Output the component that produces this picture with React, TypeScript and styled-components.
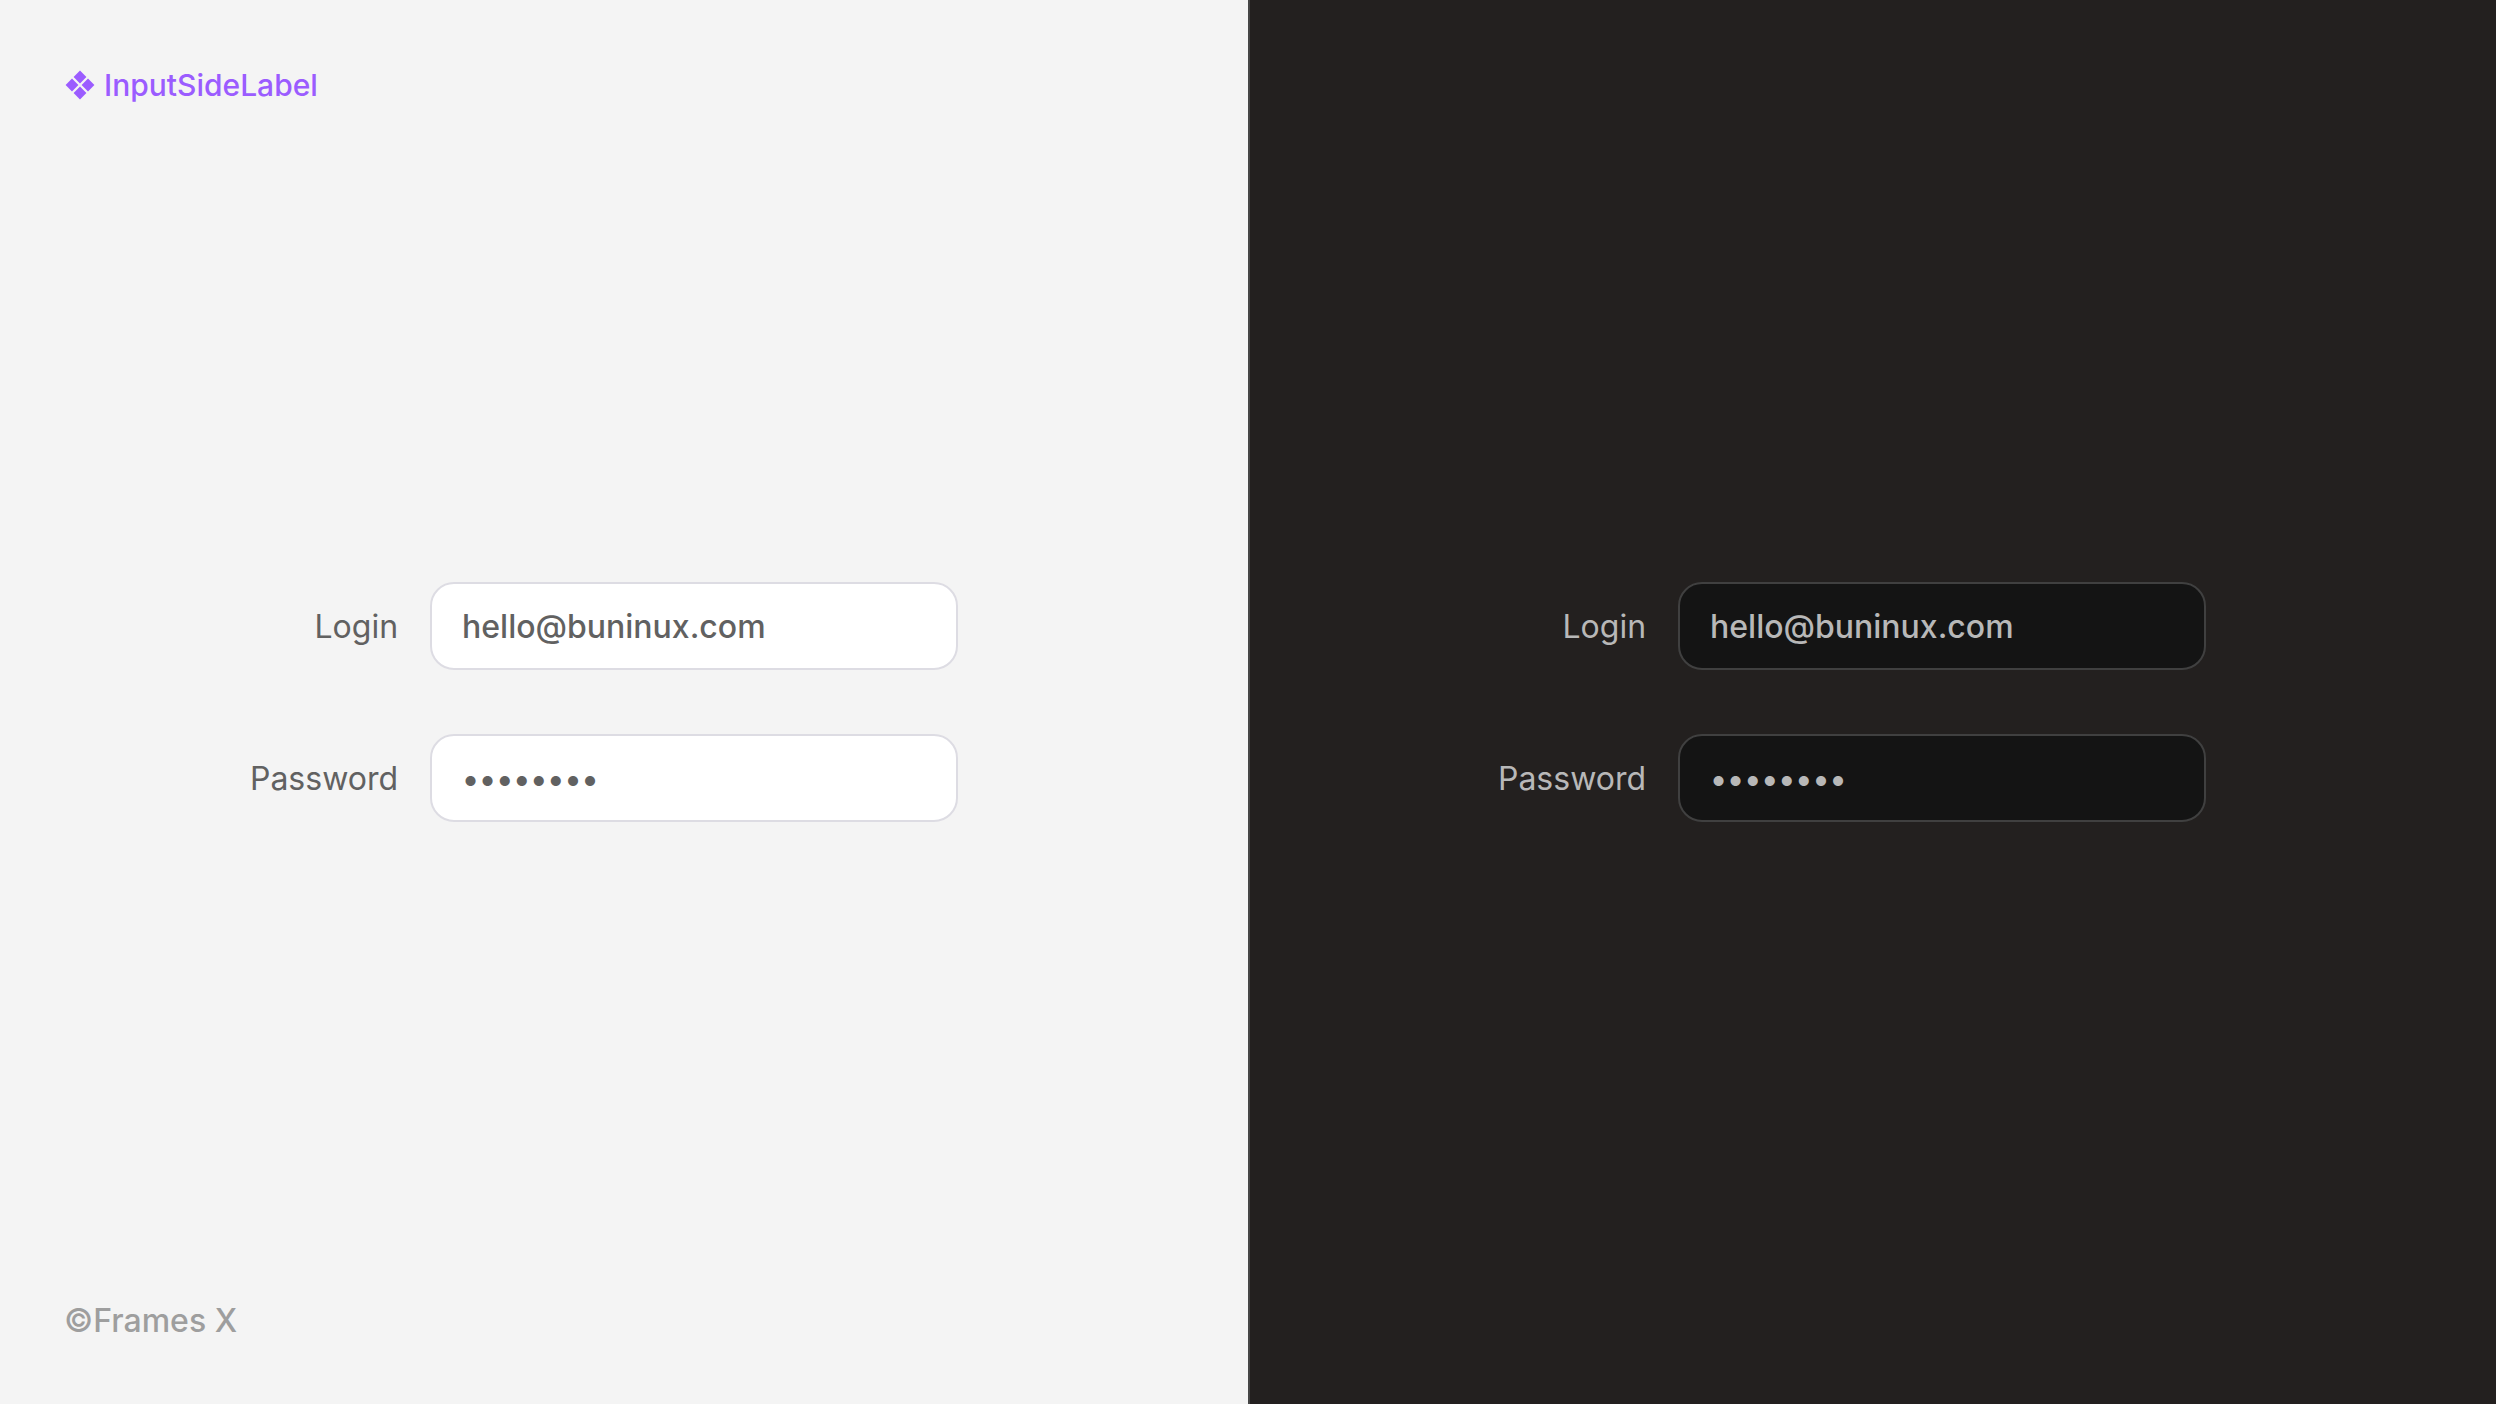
import { useId, useState } from "react";
import styled, { createGlobalStyle, ThemeProvider } from "styled-components";

const light = {
  surface: "#f4f4f4",
  field: "#ffffff",
  border: "#dddce3",
  text: "#616161",
  divider: "transparent",
};

const dark = {
  surface: "#23201f",
  field: "#141414",
  border: "#404040",
  text: "#b8b8b8",
  divider: "#464646",
};

const GlobalStyle = createGlobalStyle`
  *, *::before, *::after { box-sizing: border-box; }
  body {
    margin: 0;
    font-family: Inter, "Liberation Sans", sans-serif;
    font-size: 32px;
    line-height: 38px;
  }
`;

const Page = styled.main`
  display: grid;
  grid-template-columns: 1fr 1fr;
  min-height: 100vh;
`;

const Panel = styled.section`
  display: grid;
  grid-template-rows: 1fr auto 1fr;
  padding: 64px;
  background: ${({ theme }) => theme.surface};
  box-shadow: inset 2px 0 ${({ theme }) => theme.divider};
`;

const Heading = styled.h1`
  display: flex;
  align-items: center;
  align-self: start;
  gap: 8px;
  margin: 0;
  color: #9b5cff;
  font-size: 30px;
  font-weight: 500;
  line-height: 42px;
`;

const Credit = styled.footer`
  grid-row: 3;
  align-self: end;
  color: #9e9e9e;
  font-weight: 500;
`;

const Form = styled.form`
  grid-row: 2;
  justify-self: center;
  display: grid;
  grid-template-columns: auto minmax(0, 528px);
  align-items: center;
  gap: 64px 32px;
  padding-right: 40px;
`;

const Label = styled.label`
  padding-top: 2px;
  color: ${({ theme }) => theme.text};
  font-weight: 400;
  text-align: right;
`;

const Input = styled.input`
  width: 100%;
  height: 88px;
  padding: 0 30px;
  border: 2px solid ${({ theme }) => theme.border};
  border-radius: 24px;
  outline: none;
  background: ${({ theme }) => theme.field};
  color: ${({ theme }) => theme.text};
  font: inherit;
  font-weight: 500;
`;

function ComponentIcon() {
  return (
    <svg width="32" height="32" viewBox="0 0 32 32" fill="currentColor" aria-hidden="true">
      <path d="M16 1.6 22.4 8 16 14.4 9.6 8ZM8 9.6 14.4 16 8 22.4 1.6 16ZM24 9.6 30.4 16 24 22.4 17.6 16ZM16 17.6 22.4 24 16 30.4 9.6 24Z" />
    </svg>
  );
}

type FieldProps = { label: string; type: string; initial: string };

function Field({ label, type, initial }: FieldProps) {
  const id = useId();
  const [value, setValue] = useState(initial);
  return (
    <>
      <Label htmlFor={id}>{label}</Label>
      <Input
        id={id}
        type={type}
        value={value}
        autoComplete="off"
        spellCheck={false}
        onChange={(event) => setValue(event.target.value)}
      />
    </>
  );
}

function LoginForm() {
  return (
    <Form>
      <Field label="Login" type="email" initial="hello@buninux.com" />
      <Field label="Password" type="password" initial="password" />
    </Form>
  );
}

export default function App() {
  return (
    <>
      <GlobalStyle />
      <Page>
        <ThemeProvider theme={light}>
          <Panel>
            <Heading>
              <ComponentIcon />
              InputSideLabel
            </Heading>
            <LoginForm />
            <Credit>©Frames X</Credit>
          </Panel>
        </ThemeProvider>
        <ThemeProvider theme={dark}>
          <Panel>
            <LoginForm />
          </Panel>
        </ThemeProvider>
      </Page>
    </>
  );
}
